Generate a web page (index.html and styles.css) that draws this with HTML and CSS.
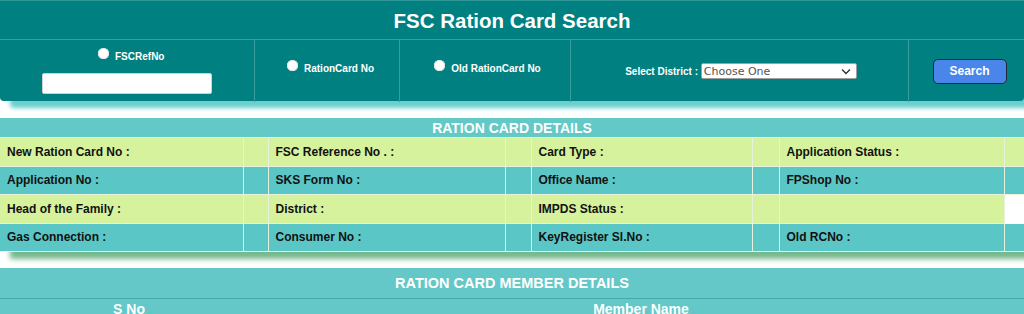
FILE: index.html
```html
<!DOCTYPE html>
<html>
<head>
<meta charset="utf-8">
<title>FSC Ration Card Search</title>
<link rel="stylesheet" href="styles.css">
</head>
<body>
<div class="search-panel">
  <div class="search-title">FSC Ration Card Search</div>
  <table class="search-table">
    <colgroup>
      <col class="w1"><col class="w2"><col class="w3"><col class="w4"><col>
    </colgroup>
    <tr>
      <td class="c1">
        <label class="opt"><span class="radio"></span>FSCRefNo</label>
        <div class="input-box"></div>
      </td>
      <td class="c2"><label class="opt"><span class="radio"></span>RationCard No</label></td>
      <td class="c3"><label class="opt"><span class="radio"></span>Old RationCard No</label></td>
      <td class="c4">
        <span class="sel-label">Select District :</span>
        <span class="select">Choose One
          <svg class="chev" width="10" height="7" viewBox="0 0 10 7"><path d="M1 1.5 L5 5.5 L9 1.5" fill="none" stroke="#333" stroke-width="1.4"/></svg>
        </span>
      </td>
      <td class="c5"><span class="btn">Search</span></td>
    </tr>
  </table>
</div>

<div class="details">
  <table class="details-table">
    <colgroup>
      <col class="d1"><col class="dv"><col class="d2"><col class="dv2"><col class="d3"><col class="dv3"><col class="d4"><col>
    </colgroup>
    <tr><th colspan="8" class="dhead">RATION CARD DETAILS</th></tr>
    <tr class="green">
      <td class="lbl">New Ration Card No :</td><td class="val"></td>
      <td class="lbl">FSC Reference No . :</td><td class="val"></td>
      <td class="lbl">Card Type :</td><td class="val"></td>
      <td class="lbl">Application Status :</td><td class="val"></td>
    </tr>
    <tr class="teal">
      <td class="lbl">Application No :</td><td class="val"></td>
      <td class="lbl">SKS Form No :</td><td class="val"></td>
      <td class="lbl">Office Name :</td><td class="val"></td>
      <td class="lbl">FPShop No :</td><td class="val"></td>
    </tr>
    <tr class="green">
      <td class="lbl">Head of the Family :</td><td class="val"></td>
      <td class="lbl">District :</td><td class="val"></td>
      <td class="lbl">IMPDS Status :</td><td class="val"></td>
      <td class="lbl"></td><td class="blank"></td>
    </tr>
    <tr class="teal">
      <td class="lbl">Gas Connection :</td><td class="val"></td>
      <td class="lbl">Consumer No :</td><td class="val"></td>
      <td class="lbl">KeyRegister Sl.No :</td><td class="val"></td>
      <td class="lbl">Old RCNo :</td><td class="val"></td>
    </tr>
  </table>
</div>

<div class="members">
  <table class="members-table">
    <colgroup><col class="m1"><col></colgroup>
    <tr><th colspan="2" class="mhead">RATION CARD MEMBER DETAILS</th></tr>
    <tr><th class="sno">S No</th><th class="mname">Member Name</th></tr>
  </table>
</div>
</body>
</html>
```

FILE: styles.css
```css
html, body {
  margin: 0;
  padding: 0;
  background: #ffffff;
  font-family: "Liberation Sans", Arial, sans-serif;
  overflow: hidden;
}

.search-panel {
  background: #008080;
  border-top: 1px solid #2f9696;
  border-radius: 0 0 4px 4px;
  box-shadow: 10px 7px 4px #6acfcf;
  height: 100px;
}

.search-title {
  height: 38px;
  line-height: 40px;
  text-align: center;
  color: #ffffff;
  font-weight: bold;
  font-size: 20.5px;
  border-bottom: 1px solid #3a9d9d;
}

.search-table {
  width: 100%;
  border-collapse: collapse;
  table-layout: fixed;
  height: 62px;
}

.w1 { width: 254px; }
.w2 { width: 145px; }
.w3 { width: 171px; }
.w4 { width: 338px; }

.search-table td {
  border-left: 1px solid #3a9d9d;
  padding: 0;
  text-align: center;
  vertical-align: middle;
  color: #ffffff;
  font-weight: bold;
  font-size: 10px;
}
.search-table td:first-child { border-left: none; }

.search-table td.c1 { vertical-align: top; padding-top: 11px; }
.c1 .opt { margin-left: 9px; }
.search-table td.c2 { padding-left: 8px; }
.search-table td.c3 { padding-left: 6px; }

.opt {
  display: inline-flex;
  align-items: center;
  gap: 6px;
}
.c2 .opt, .c3 .opt { position: relative; top: -2px; }

.radio {
  width: 11px;
  height: 11px;
  border-radius: 50%;
  background: #ffffff;
  box-shadow: inset 0 0 0 1px #e4e4e4;
  position: relative;
  top: -3px;
}

.input-box {
  width: 170px;
  height: 21px;
  background: #ffffff;
  border: 1px solid #d0d0d0;
  box-sizing: border-box;
  border-radius: 2px;
  margin: 9px 0 0 42px;
}

.search-table td.c4 { padding-left: 4px; }

.sel-label {
  font-size: 10px;
  font-weight: bold;
  vertical-align: middle;
}

.select {
  display: inline-flex;
  align-items: center;
  justify-content: space-between;
  width: 156px;
  height: 16px;
  box-sizing: border-box;
  background: #ffffff;
  border: 1px solid #a0a0a0;
  border-radius: 2px;
  padding: 0 5px 0 2px;
  color: #555555;
  font-weight: normal;
  font-family: "DejaVu Sans", "Liberation Sans", sans-serif;
  font-size: 11px;
  vertical-align: middle;
  text-align: left;
}

.chev { flex: none; }

.search-table td.c5 { text-align: left; padding-left: 24px; }

.btn {
  display: inline-block;
  width: 74px;
  height: 25px;
  line-height: 22px;
  box-sizing: border-box;
  background: #4a86ea;
  border: 1.5px solid #1e2a3a;
  border-radius: 5px;
  color: #ffffff;
  font-size: 12px;
  font-weight: bold;
  text-align: center;
  position: relative;
  top: 0;
}

.details {
  margin-top: 17px;
  box-shadow: 10px 7px 5px #76b98e;
}

.details-table {
  width: 100%;
  border-collapse: collapse;
  table-layout: fixed;
}

.d1 { width: 243px; }
.dv { width: 25px; }
.d2 { width: 237px; }
.dv2 { width: 26px; }
.d3 { width: 221px; }
.dv3 { width: 27px; }
.d4 { width: 225px; }

.dhead {
  background: #63c9c6;
  color: #ffffff;
  font-size: 14px;
  font-weight: bold;
  height: 19px;
  padding: 0;
  text-align: center;
}

.details-table td {
  border: 1px solid #e6f2dc;
  height: 27.5px;
  padding: 0 0 0 7px;
  font-size: 12px;
  font-weight: bold;
  color: #111111;
  text-align: left;
  white-space: nowrap;
}
.details-table tr td:first-child { border-left: none; }
.details-table tr td:last-child { border-right: none; }

.green td { background: #d7f29c; }
.teal td { background: #5bc6c6; }
.details-table .green td.blank { background: #ffffff; border-color: #ffffff; }

.members {
  margin-top: 16px;
}

.members-table {
  width: 100%;
  border-collapse: collapse;
  table-layout: fixed;
}

.m1 { width: 258px; }

.members-table th {
  background: #63c8c7;
  color: #ffffff;
  font-weight: bold;
  padding: 0;
  text-align: center;
}

.mhead {
  height: 30px;
  font-size: 14.5px;
  border-bottom: 1px solid #4aa8a8;
}

.sno, .mname {
  height: 20px;
  font-size: 14px;
  line-height: 18px;
}
```
